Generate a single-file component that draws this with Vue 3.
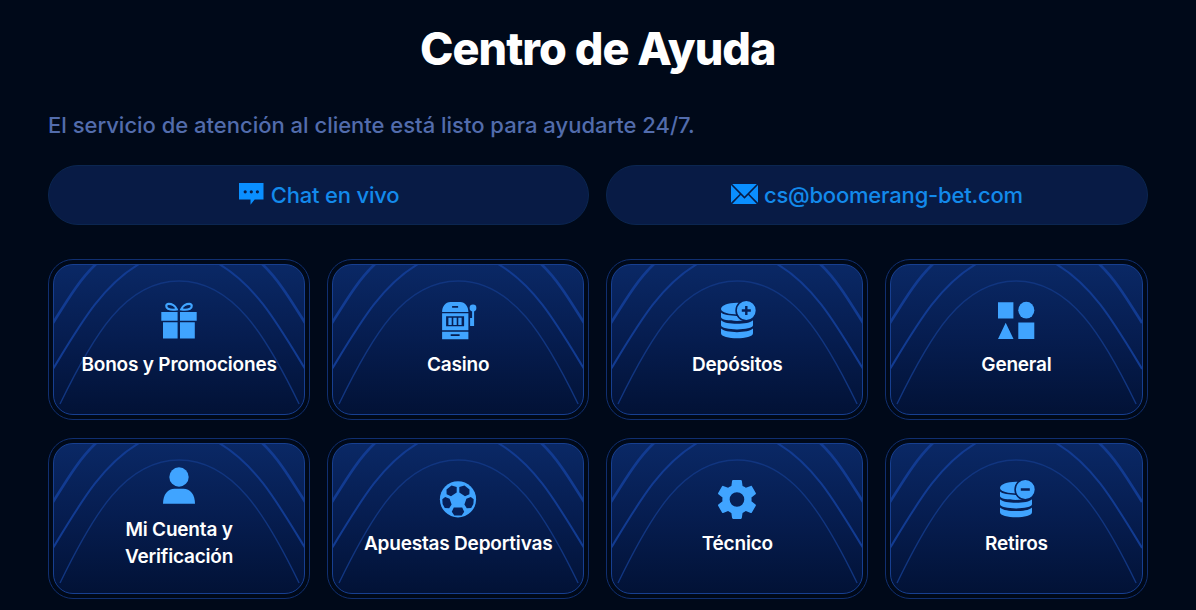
<template>
  <main class="help-center">
    <h1 class="title">Centro de Ayuda</h1>
    <p class="subtitle">El servicio de atención al cliente está listo para ayudarte 24/7.</p>

    <div class="contacts">
      <a class="contact" href="#">
        <svg class="chat-icon" viewBox="0 0 25 22">
          <path fill-rule="evenodd" d="M0 0h24.5v16.5h-8.8L11.5 21.7V16.5H0zM4.6 8.8a1.6 1.6 0 1 0 3.2 0a1.6 1.6 0 1 0-3.2 0M10.7 8.8a1.6 1.6 0 1 0 3.2 0a1.6 1.6 0 1 0-3.2 0M16.8 8.8a1.6 1.6 0 1 0 3.2 0a1.6 1.6 0 1 0-3.2 0" />
        </svg>
        <span>Chat en vivo</span>
      </a>
      <a class="contact" href="#">
        <svg class="mail-icon" viewBox="0 0 27 20">
          <path d="M1.2 0h24.6L13.5 12.6zM0 .9l8.8 9L0 18.7zM27 .9v17.8l-8.8-8.8zM9.8 10.9l3.7 3.8 3.7-3.8 8.6 9.1H1.2z" />
        </svg>
        <span>cs@boomerang-bet.com</span>
      </a>
    </div>

    <div class="topics">
      <a v-for="topic in topics" :key="topic.label" class="topic" href="#">
        <div class="topic-inner">
          <svg class="arches" viewBox="0 0 252 151" preserveAspectRatio="none">
            <path class="arch-thin" d="M7 140C40 72 72 17 126 17S213 72 246 140" />
            <path class="arch" d="M0 105C28 59 49 22 86 0M252 105C224 59 203 22 166 0" />
            <path class="arch-thick" d="M0 59C15 35 27 15 43 0M252 59C237 35 225 15 209 0" />
          </svg>
          <svg class="topic-icon" viewBox="0 0 40 40">
            <template v-if="topic.icon === 'gift'">
              <path d="M2.3 12h16.3v8.7H2.3zM21 12h16.7v8.7H21zM4 22.3h14.6v16.2H4zM21 22.3h14.8v16.2H21z" />
              <path class="line" d="M17.8 9.4C16.500 5.500 12.500 3.700 9.600 3.800C6.600 4 6.600 7.500 9 8.700C11.500 9.900 15 9.900 17.800 9.400ZM22.200 9.400C23.500 5.500 27.500 3.700 30.400 3.800C33.400 4 33.400 7.500 31 8.700C28.500 9.900 25 9.900 22.200 9.400Z" />
            </template>
            <g v-else-if="topic.icon === 'slot'" transform="translate(-.6 0)">
              <path fill-rule="evenodd" d="M4.7 12C4.7 6.5 8 2 13 2h9.7C27.7 2 31 6.5 31 12zM14.700 6v1.700h6V6z" />
              <path fill-rule="evenodd" d="M4.7 13.3H31v17H4.7zM8.7 16.3v9.9h18v-9.9z" />
              <path d="M11 17.7h3.300v7.200H11zM15.900 17.700h3.400v7.200h-3.400zM20.900 17.700h3.300v7.200h-3.300z" />
              <path fill-rule="evenodd" d="M4.7 31.7H31V39.2H4.7zM13.3 34.3v1.8h8.900v-1.800z" />
              <path d="M34.7 9h2v17h-4v-8h2z" />
              <circle cx="35.6" cy="8" r="3.4" />
            </g>
            <template v-else-if="topic.icon === 'deposit' || topic.icon === 'withdraw'">
              <path d="M4 9C4 5.5 11 2.7 20 2.7S36 5.5 36 9v1C36 16 4 16 4 9z" />
              <path d="M4 12.6C8 17 32 17 36 12.6V17C36 22.2 4 22.2 4 17z" />
              <path d="M4 20.3C8 25 32 25 36 20.3V25.3C36 30.8 4 30.8 4 25.3z" />
              <path d="M4 28.6C8 33.3 32 33.3 36 28.6V33.3C36 40 4 40 4 33.3z" />
              <circle class="badge" cx="29.3" cy="10.5" r="10.2" />
              <path class="sign" d="M24.8 10.5h9" />
              <path v-if="topic.icon === 'deposit'" class="sign" d="M29.3 6v9" />
            </template>
            <template v-else-if="topic.icon === 'shapes'">
              <path d="M2 2.2h15.400v16.400H2zM22.300 22.600h16v16.500h-16zM9.700 22.700l7.800 16.400H2z" />
              <ellipse cx="30.3" cy="10.2" rx="8" ry="8.4" />
            </template>
            <template v-else-if="topic.icon === 'user'">
              <circle cx="20" cy="12" r="9.7" />
              <path d="M4 38.8C4 29.3 9 23.8 15.5 23.8h9C31 23.8 36 29.3 36 38.8z" />
            </template>
            <template v-else-if="topic.icon === 'ball'">
              <circle cx="20" cy="20.3" r="18.1" />
              <path class="cutout" d="M8.5 10.5L13.5 6.4 18.7 8V13.4L13 17.2 8.6 15.3zM31.5 10.5L26.5 6.4 21.3 8V13.4L27 17.2 31.4 15.3zM4.3 20.2L7.2 18 11.6 19.7 13.6 25.4 11.2 29.3 6.8 29.1 4.6 25zM35.7 20.2L32.8 18 28.4 19.7 26.4 25.4 28.8 29.3 33.2 29.1 35.4 25zM15.8 28.5h8.4l2 4.2-2.5 3.7h-7.4l-2.5-3.7z" />
            </template>
            <path
              v-else
              transform="translate(-4.4 -3.9) scale(2.03)"
              fill-rule="evenodd"
              d="M19.14 12.94c.04-.3.06-.61.06-.94 0-.32-.02-.64-.07-.94l2.03-1.58c.18-.14.23-.41.12-.61l-1.92-3.32c-.12-.22-.37-.29-.59-.22l-2.39.96c-.5-.38-1.03-.7-1.62-.94L14.4 2.81c-.04-.24-.24-.41-.48-.41h-3.84c-.24 0-.43.17-.47.41L9.25 5.35C8.66 5.59 8.12 5.92 7.63 6.29L5.24 5.33c-.22-.08-.47 0-.59.22L2.74 8.87c-.12.21-.08.47.12.61l2.03 1.58C4.84 11.36 4.8 11.69 4.8 12s.02.64.07.94l-2.03 1.58c-.18.14-.23.41-.12.61l1.92 3.32c.12.22.37.29.59.22l2.39-.96c.5.38 1.03.7 1.62.94l.36 2.54c.05.24.24.41.48.41h3.84c.24 0 .44-.17.47-.41l.36-2.54c.59-.24 1.13-.56 1.62-.94l2.39.96c.22.08.47 0 .59-.22l1.92-3.32c.12-.22.07-.47-.12-.61zM8.4 12a3.6 3.6 0 1 0 7.2 0a3.6 3.6 0 1 0-7.2 0z"
            />
          </svg>
          <span class="topic-label">{{ topic.label }}</span>
        </div>
      </a>
    </div>
  </main>
</template>

<script setup>
const topics = [
  { label: 'Bonos y Promociones', icon: 'gift' },
  { label: 'Casino', icon: 'slot' },
  { label: 'Depósitos', icon: 'deposit' },
  { label: 'General', icon: 'shapes' },
  { label: 'Mi Cuenta y Verificación', icon: 'user' },
  { label: 'Apuestas Deportivas', icon: 'ball' },
  { label: 'Técnico', icon: 'gear' },
  { label: 'Retiros', icon: 'withdraw' }
]
</script>

<style>
body {
  margin: 0;
  background: #000919;
}
</style>

<style scoped>
.help-center {
  box-sizing: border-box;
  height: 610px;
  padding: 21px 48.5px 0 48px;
  overflow: hidden;
  background: #000919;
  font-family: Inter, "Liberation Sans", sans-serif;
}

.title {
  margin: 0;
  color: #ffffff;
  font-size: 45px;
  font-weight: 800;
  line-height: 55px;
  letter-spacing: -1px;
  text-align: center;
}

.subtitle {
  margin: 33px 0 24px;
  color: #526cac;
  font-size: 22px;
  font-weight: 500;
  line-height: 32px;
  letter-spacing: -0.01px;
}

.contacts {
  display: grid;
  grid-template-columns: 1fr 1fr;
  gap: 17px;
}

.contact {
  box-sizing: border-box;
  display: flex;
  align-items: center;
  justify-content: center;
  height: 60px;
  border: 1px solid #0b2650;
  border-radius: 30px;
  background: #081b45;
  color: #138aeb;
  font-size: 22px;
  font-weight: 500;
  letter-spacing: -0.2px;
  text-decoration: none;
}

.chat-icon {
  width: 25px;
  height: 22px;
  margin: 0 7px 3px 1px;
  fill: #0a8fff;
}

.mail-icon {
  width: 27px;
  height: 20px;
  margin: 0 6px 2px 0;
  fill: #0a8fff;
}

.topics {
  display: grid;
  grid-template-columns: repeat(4, 1fr);
  gap: 18px 17px;
  margin-top: 34px;
}

.topic {
  box-sizing: border-box;
  height: 161px;
  padding: 4px;
  border: 1px solid #102f70;
  border-radius: 25px;
  text-decoration: none;
}

.topic-inner {
  position: relative;
  box-sizing: border-box;
  display: flex;
  flex-direction: column;
  align-items: center;
  justify-content: center;
  gap: 11px;
  height: 100%;
  padding-bottom: 2px;
  border: 1px solid #173f90;
  border-radius: 20px;
  overflow: hidden;
  background: linear-gradient(#0a2865, #061d50 48%, #021236);
}

.arches {
  position: absolute;
  inset: -1px;
  width: calc(100% + 2px);
  height: calc(100% + 2px);
  fill: none;
  stroke: #123b91;
}

.arch-thin {
  stroke: #11357f;
  stroke-width: 1.4;
}

.arch {
  stroke-width: 2;
}

.arch-thick {
  stroke-width: 2.7;
}

.topic-icon {
  position: relative;
  width: 40px;
  height: 40px;
  fill: #40a4ff;
}

.line {
  fill: none;
  stroke: #40a4ff;
  stroke-width: 2.2;
}

.badge {
  stroke: #06205a;
  stroke-width: 1.6;
}

.sign {
  stroke: #06205a;
  stroke-width: 2.4;
}

.cutout {
  fill: #06205a;
}

.topic-label {
  position: relative;
  max-width: 200px;
  color: #ffffff;
  font-size: 19px;
  font-weight: 600;
  line-height: 27px;
  letter-spacing: -0.2px;
  text-align: center;
}
</style>
